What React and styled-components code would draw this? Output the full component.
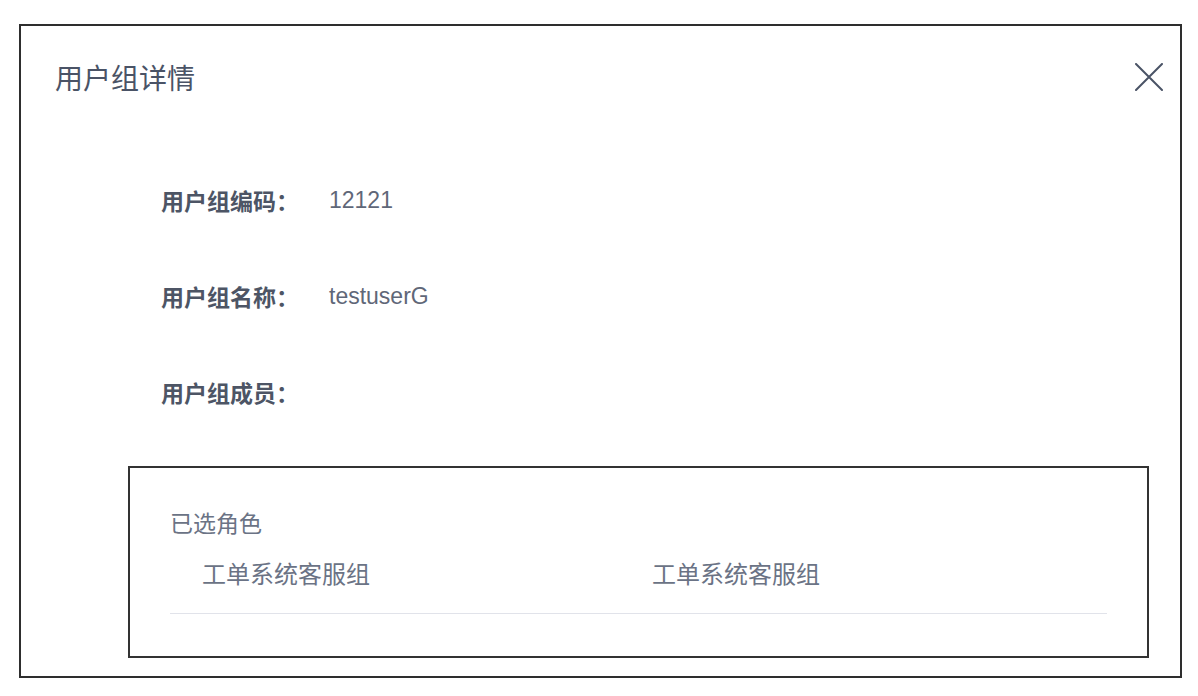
import React from "react";
import styled, { createGlobalStyle } from "styled-components";

const GlobalStyle = createGlobalStyle`
  html, body {
    margin: 0;
    padding: 0;
    background: #fff;
  }
  body {
    font-family: "Liberation Sans", "Noto Sans CJK SC", sans-serif;
  }
`;

const Modal = styled.div`
  box-sizing: border-box;
  width: 1163px;
  height: 654px;
  margin: 24px 0 0 19px;
  border: 2px solid #2e2e2e;
  display: flex;
  flex-direction: column;
`;

const Header = styled.div`
  display: flex;
  align-items: center;
  justify-content: space-between;
  padding: 31px 16px 55px 34px;
`;

const Title = styled.div`
  font-family: "Noto Sans CJK SC", sans-serif;
  font-size: 28px;
  line-height: 40px;
  color: #4a5366;
`;

const Close = styled.button`
  width: 30px;
  height: 30px;
  padding: 0;
  border: none;
  background: none;
  display: flex;
  align-items: center;
  justify-content: center;
  color: #4a5366;
`;

const Fields = styled.div`
  display: flex;
  flex-direction: column;
  padding-left: 140px;
`;

const Field = styled.div`
  display: flex;
  align-items: center;
  height: 96px;
`;

const Label = styled.span`
  font-family: "Noto Sans CJK SC", sans-serif;
  font-weight: 700;
  font-size: 23px;
  color: #4d5565;
  width: 168px;
`;

const Value = styled.span`
  font-size: 23px;
  color: #5f6778;
`;

const Panel = styled.div`
  box-sizing: border-box;
  width: 1021px;
  height: 192px;
  margin: 26px 0 0 107px;
  border: 2px solid #333;
  padding: 38px 40px 0 40px;
`;

const PanelTitle = styled.div`
  font-family: "Noto Sans CJK SC", sans-serif;
  font-size: 23px;
  line-height: 32px;
  color: #6b7385;
`;

const Roles = styled.div`
  display: grid;
  grid-template-columns: 450px 1fr;
  margin-top: 19px;
  padding-bottom: 24px;
  border-bottom: 1px solid #e1e3ea;
`;

const Role = styled.div`
  font-family: "Noto Sans CJK SC", sans-serif;
  font-size: 24px;
  line-height: 32px;
  color: #6b7385;
  padding-left: 32px;
`;

const fields = [
  { label: "用户组编码：", value: "12121" },
  { label: "用户组名称：", value: "testuserG" },
  { label: "用户组成员：", value: "" },
];

const roles = ["工单系统客服组", "工单系统客服组"];

export default function App() {
  return (
    <>
      <GlobalStyle />
      <Modal>
        <Header>
          <Title>用户组详情</Title>
          <Close aria-label="close">
            <svg width="28" height="28" viewBox="0 0 28 28">
              <path
                d="M1 1 L27 27 M27 1 L1 27"
                stroke="currentColor"
                strokeWidth="2"
                strokeLinecap="round"
              />
            </svg>
          </Close>
        </Header>
        <Fields>
          {fields.map((f) => (
            <Field key={f.label}>
              <Label>{f.label}</Label>
              <Value>{f.value}</Value>
            </Field>
          ))}
        </Fields>
        <Panel>
          <PanelTitle>已选角色</PanelTitle>
          <Roles>
            {roles.map((r, i) => (
              <Role key={i}>{r}</Role>
            ))}
          </Roles>
        </Panel>
      </Modal>
    </>
  );
}
